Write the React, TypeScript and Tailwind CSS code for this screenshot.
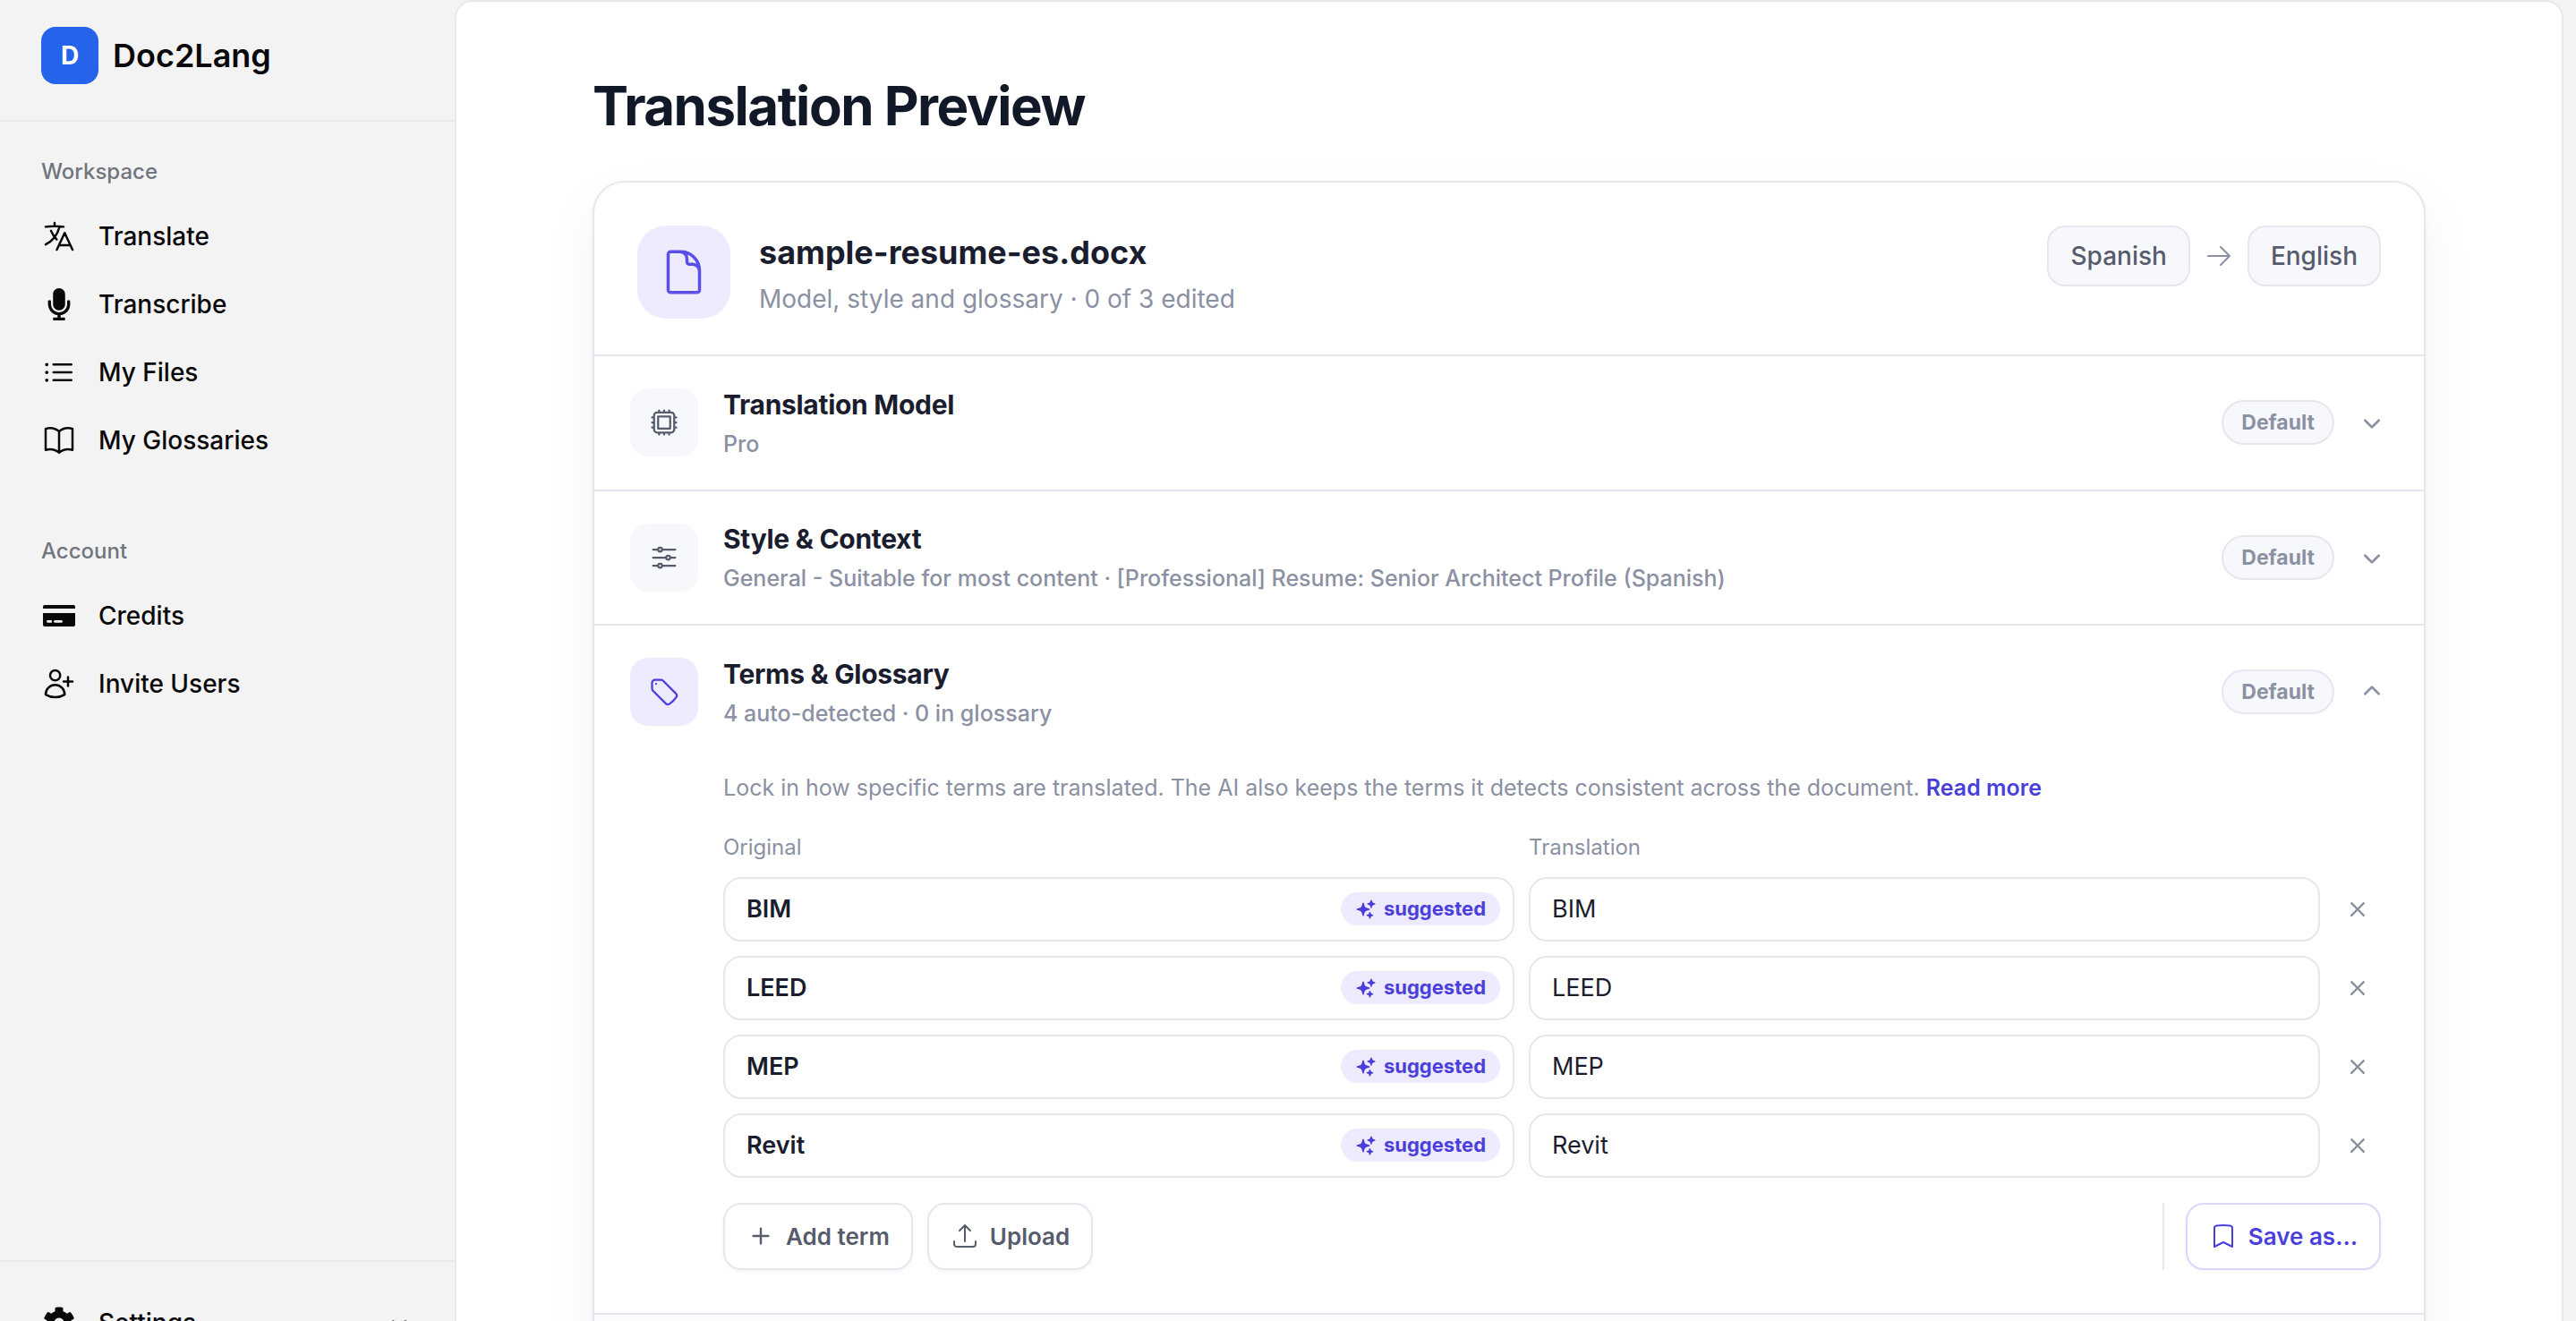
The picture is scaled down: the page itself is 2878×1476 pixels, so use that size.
import React from 'react';
import { FaCog, FaMicrophone } from 'react-icons/fa';
import {
  HiMiniChevronDown, HiMiniPlus, HiMiniXMark, HiOutlineAdjustmentsHorizontal,
  HiOutlineArrowRight, HiOutlineArrowUpTray, HiOutlineBookmark, HiOutlineBookOpen,
  HiOutlineCpuChip, HiOutlineDocument, HiOutlineLanguage, HiOutlineListBullet,
  HiOutlineTag, HiOutlineUserPlus, HiSparkles
} from 'react-icons/hi2';
import { clsx } from 'clsx';

const CreditIcon = () => (
  <svg viewBox="0 0 36 24" className="w-9 h-6" fill="currentColor">
    <path d="M2 0h32a2 2 0 0 1 2 2v2H0V2a2 2 0 0 1 2-2Z" />
    <path
      fillRule="evenodd"
      d="M0 9h36v13a2 2 0 0 1-2 2H2a2 2 0 0 1-2-2V9Zm5.5 8a1.4 1.4 0 0 0 0 2.8h3.3a1.4 1.4 0 0 0 0-2.8H5.5Zm8 0a1.4 1.4 0 0 0 0 2.8h7a1.4 1.4 0 0 0 0-2.8h-7Z"
    />
  </svg>
);

interface NavItemProps {
  icon: React.ReactNode;
  label: string;
  trailing?: React.ReactNode;
}

const NavItem: React.FC<NavItemProps> = ({ icon, label, trailing }) => (
  <a className="flex items-center gap-6 h-[72px] shrink-0 text-[28px] font-medium text-[#09090b]">
    <span className="flex items-center justify-center w-10 h-10">{icon}</span>
    <span className="flex-1">{label}</span>
    {trailing}
  </a>
);

const Sidebar = () => (
  <aside className="w-[508px] shrink-0 flex flex-col">
    <div className="h-[136px] shrink-0 flex items-start gap-4 pt-[30px] pl-[46px] border-b-2 border-[#e9e9e9]">
      <div className="w-16 h-16 rounded-2xl bg-[#2563eb] flex items-center justify-center text-white text-[28px] font-bold">
        D
      </div>
      <span className="text-[36px] leading-[64px] font-semibold text-[#09090b]">Doc2Lang</span>
    </div>

    <nav className="flex-1 flex flex-col px-[46px] pt-8">
      <p className="h-12 mb-3 text-[24px] leading-[48px] font-medium text-[#71757e]">Workspace</p>
      <div className="flex flex-col gap-1">
        <NavItem icon={<HiOutlineLanguage size={40} />} label="Translate" />
        <NavItem icon={<FaMicrophone size={36} />} label="Transcribe" />
        <NavItem icon={<HiOutlineListBullet size={40} />} label="My Files" />
        <NavItem icon={<HiOutlineBookOpen size={40} />} label="My Glossaries" />
      </div>
      <p className="h-12 mt-16 mb-3 text-[24px] leading-[48px] font-medium text-[#71757e]">Account</p>
      <div className="flex flex-col gap-1">
        <NavItem icon={<CreditIcon />} label="Credits" />
        <NavItem icon={<HiOutlineUserPlus size={40} />} label="Invite Users" />
      </div>
    </nav>

    <div className="h-[68px] shrink-0 px-[46px] pt-8 border-t-2 border-[#e9e9e9] overflow-hidden">
      <NavItem
        icon={<FaCog size={36} />}
        label="Settings"
        trailing={<HiMiniChevronDown size={32} className="text-[#71757e]" />}
      />
    </div>
  </aside>
);

interface SectionHeaderProps {
  icon: React.ReactNode;
  title: string;
  subtitle: string;
  open?: boolean;
}

const SectionHeader: React.FC<SectionHeaderProps> = ({ icon, title, subtitle, open }) => (
  <div className="flex items-center h-[148.5px] px-10">
    <div
      className={clsx(
        'w-[76px] h-[76px] rounded-[20px] flex items-center justify-center',
        open ? 'bg-[#efebff] text-[#4a3fdb]' : 'bg-[#f7f8fc] text-[#575c6d]'
      )}
    >
      {icon}
    </div>
    <div className="flex-1 ml-7 pt-[3px]">
      <h3 className="text-[30px] leading-[42px] font-bold tracking-[-0.01em] text-[#1a1d2e]">{title}</h3>
      <p className="mt-0.5 text-[25px] leading-[42px] font-medium text-[#8b90a3]">{subtitle}</p>
    </div>
    <span className="flex items-center h-[50px] px-5 rounded-full border-2 border-[#e6e6ef] bg-[#f7f8fc] text-[23px] font-bold text-[#8b90a3]">
      Default
    </span>
    <HiMiniChevronDown size={36} className={clsx('ml-6 text-[#8b90a3]', open && 'rotate-180')} />
  </div>
);

const LanguageChip = ({ children }: { children: React.ReactNode }) => (
  <span className="flex items-center h-[68px] px-6 rounded-[20px] border-2 border-[#e6e6ef] bg-[#f7f8fc] text-[28px] font-medium text-[#575c6d]">
    {children}
  </span>
);

const TermRow = ({ term }: { term: string }) => (
  <div className="flex items-center">
    <div className="flex items-center justify-between w-[884px] h-[72px] pl-6 pr-[14px] rounded-[20px] border-2 border-[#e6e6ef] text-[27px] text-[#1a1d2e]">
      <span className="pt-0.5 font-semibold">{term}</span>
      <span className="flex items-center gap-2 h-[37px] px-4 rounded-full bg-[#efebff] text-[22px] font-bold text-[#4a3fdb]">
        <HiSparkles size={24} />
        suggested
      </span>
    </div>
    <div className="flex items-center w-[884px] h-[72px] ml-4 px-6 pt-0.5 rounded-[20px] border-2 border-[#e6e6ef] text-[27px] text-[#1a1d2e]">
      {term}
    </div>
    <HiMiniXMark size={32} className="ml-[26px] text-[#8b90a3]" />
  </div>
);

const ActionButton = ({ className, children }: { className: string; children: React.ReactNode }) => (
  <button
    className={clsx(
      'flex items-center gap-3 h-[75px] px-6 rounded-[20px] border-2 bg-white text-[26px] font-semibold whitespace-nowrap shadow-[0_2px_4px_rgba(20,20,50,0.04)]',
      className
    )}
  >
    {children}
  </button>
);

const terms = ['BIM', 'LEED', 'MEP', 'Revit'];

export default function App() {
  return (
    <div className="flex w-[2878px] h-[1476px] overflow-hidden bg-[#f3f3f3] font-['Inter',sans-serif]">
      <Sidebar />

      <main className="w-[2356px] h-[1600px] shrink-0 px-[152px] pt-20 rounded-[20px] border-2 border-[#e9e9e9] bg-white">
        <h1 className="mb-12 text-[60px] leading-[72px] font-bold tracking-[-0.025em] text-[#111827]">
          Translation Preview
        </h1>

        <div className="w-[2048px] h-[1398px] rounded-[36px] border-2 border-[#e6e6ef] bg-white overflow-hidden shadow-[0_2px_4px_rgba(20,20,50,0.03),0_24px_64px_rgba(20,20,50,0.05)]">
          {/* File header */}
          <div className="flex items-start h-[194px] px-12 pt-12 border-b-2 border-[#e6e6ef]">
            <div className="w-[104px] h-[104px] rounded-[32px] bg-[#efebff] text-[#5b50e5] flex items-center justify-center">
              <HiOutlineDocument size={56} />
            </div>
            <div className="flex-1 ml-8 pt-2">
              <h2 className="text-[36px] leading-[44px] font-bold text-[#1a1d2e]">sample-resume-es.docx</h2>
              <p className="mt-[10px] text-[28px] leading-10 text-[#8b90a3]">Model, style and glossary · 0 of 3 edited</p>
            </div>
            <div className="flex items-center gap-4">
              <LanguageChip>Spanish</LanguageChip>
              <HiOutlineArrowRight size={32} className="text-[#8b90a3]" />
              <LanguageChip>English</LanguageChip>
            </div>
          </div>

          <section className="border-b-2 border-[#e6e6ef]">
            <SectionHeader icon={<HiOutlineCpuChip size={36} />} title="Translation Model" subtitle="Pro" />
          </section>

          <section className="border-b-2 border-[#e6e6ef]">
            <SectionHeader
              icon={<HiOutlineAdjustmentsHorizontal size={36} />}
              title="Style & Context"
              subtitle="General - Suitable for most content · [Professional] Resume: Senior Architect Profile (Spanish)"
            />
          </section>

          {/* Terms & Glossary */}
          <section className="h-[770px] border-b-2 border-[#e6e6ef]">
            <SectionHeader
              icon={<HiOutlineTag size={36} />}
              title="Terms & Glossary"
              subtitle="4 auto-detected · 0 in glossary"
              open
            />
            <div className="pl-36 pr-12 pt-[11px]">
              <p className="text-[25px] leading-[42px] text-[#8b90a3]">
                Lock in how specific terms are translated. The AI also keeps the terms it detects consistent across the document.{' '}
                <a className="font-semibold text-[#4a3fdb]">Read more</a>
              </p>
              <div className="flex gap-4 mt-7 mb-[15px] text-[24px] leading-9 text-[#8b90a3]">
                <span className="w-[884px]">Original</span>
                <span className="w-[884px]">Translation</span>
              </div>
              <div className="flex flex-col gap-4">
                {terms.map((term) => (
                  <TermRow key={term} term={term} />
                ))}
              </div>
              <div className="flex items-center gap-4 mt-7">
                <ActionButton className="border-[#e6e6ef] text-[#575c6d]">
                  <HiMiniPlus size={32} />
                  Add term
                </ActionButton>
                <ActionButton className="border-[#e6e6ef] text-[#575c6d]">
                  <HiOutlineArrowUpTray size={32} />
                  Upload
                </ActionButton>
                <div className="flex ml-auto pl-6 border-l-2 border-[#e6e6ef]">
                  <ActionButton className="border-[#dcd6fd] text-[#4a3fdb]">
                    <HiOutlineBookmark size={32} />
                    Save as…
                  </ActionButton>
                </div>
              </div>
            </div>
          </section>

          <div className="h-32 bg-[#fbfbfe]" />
        </div>
      </main>
    </div>
  );
}
